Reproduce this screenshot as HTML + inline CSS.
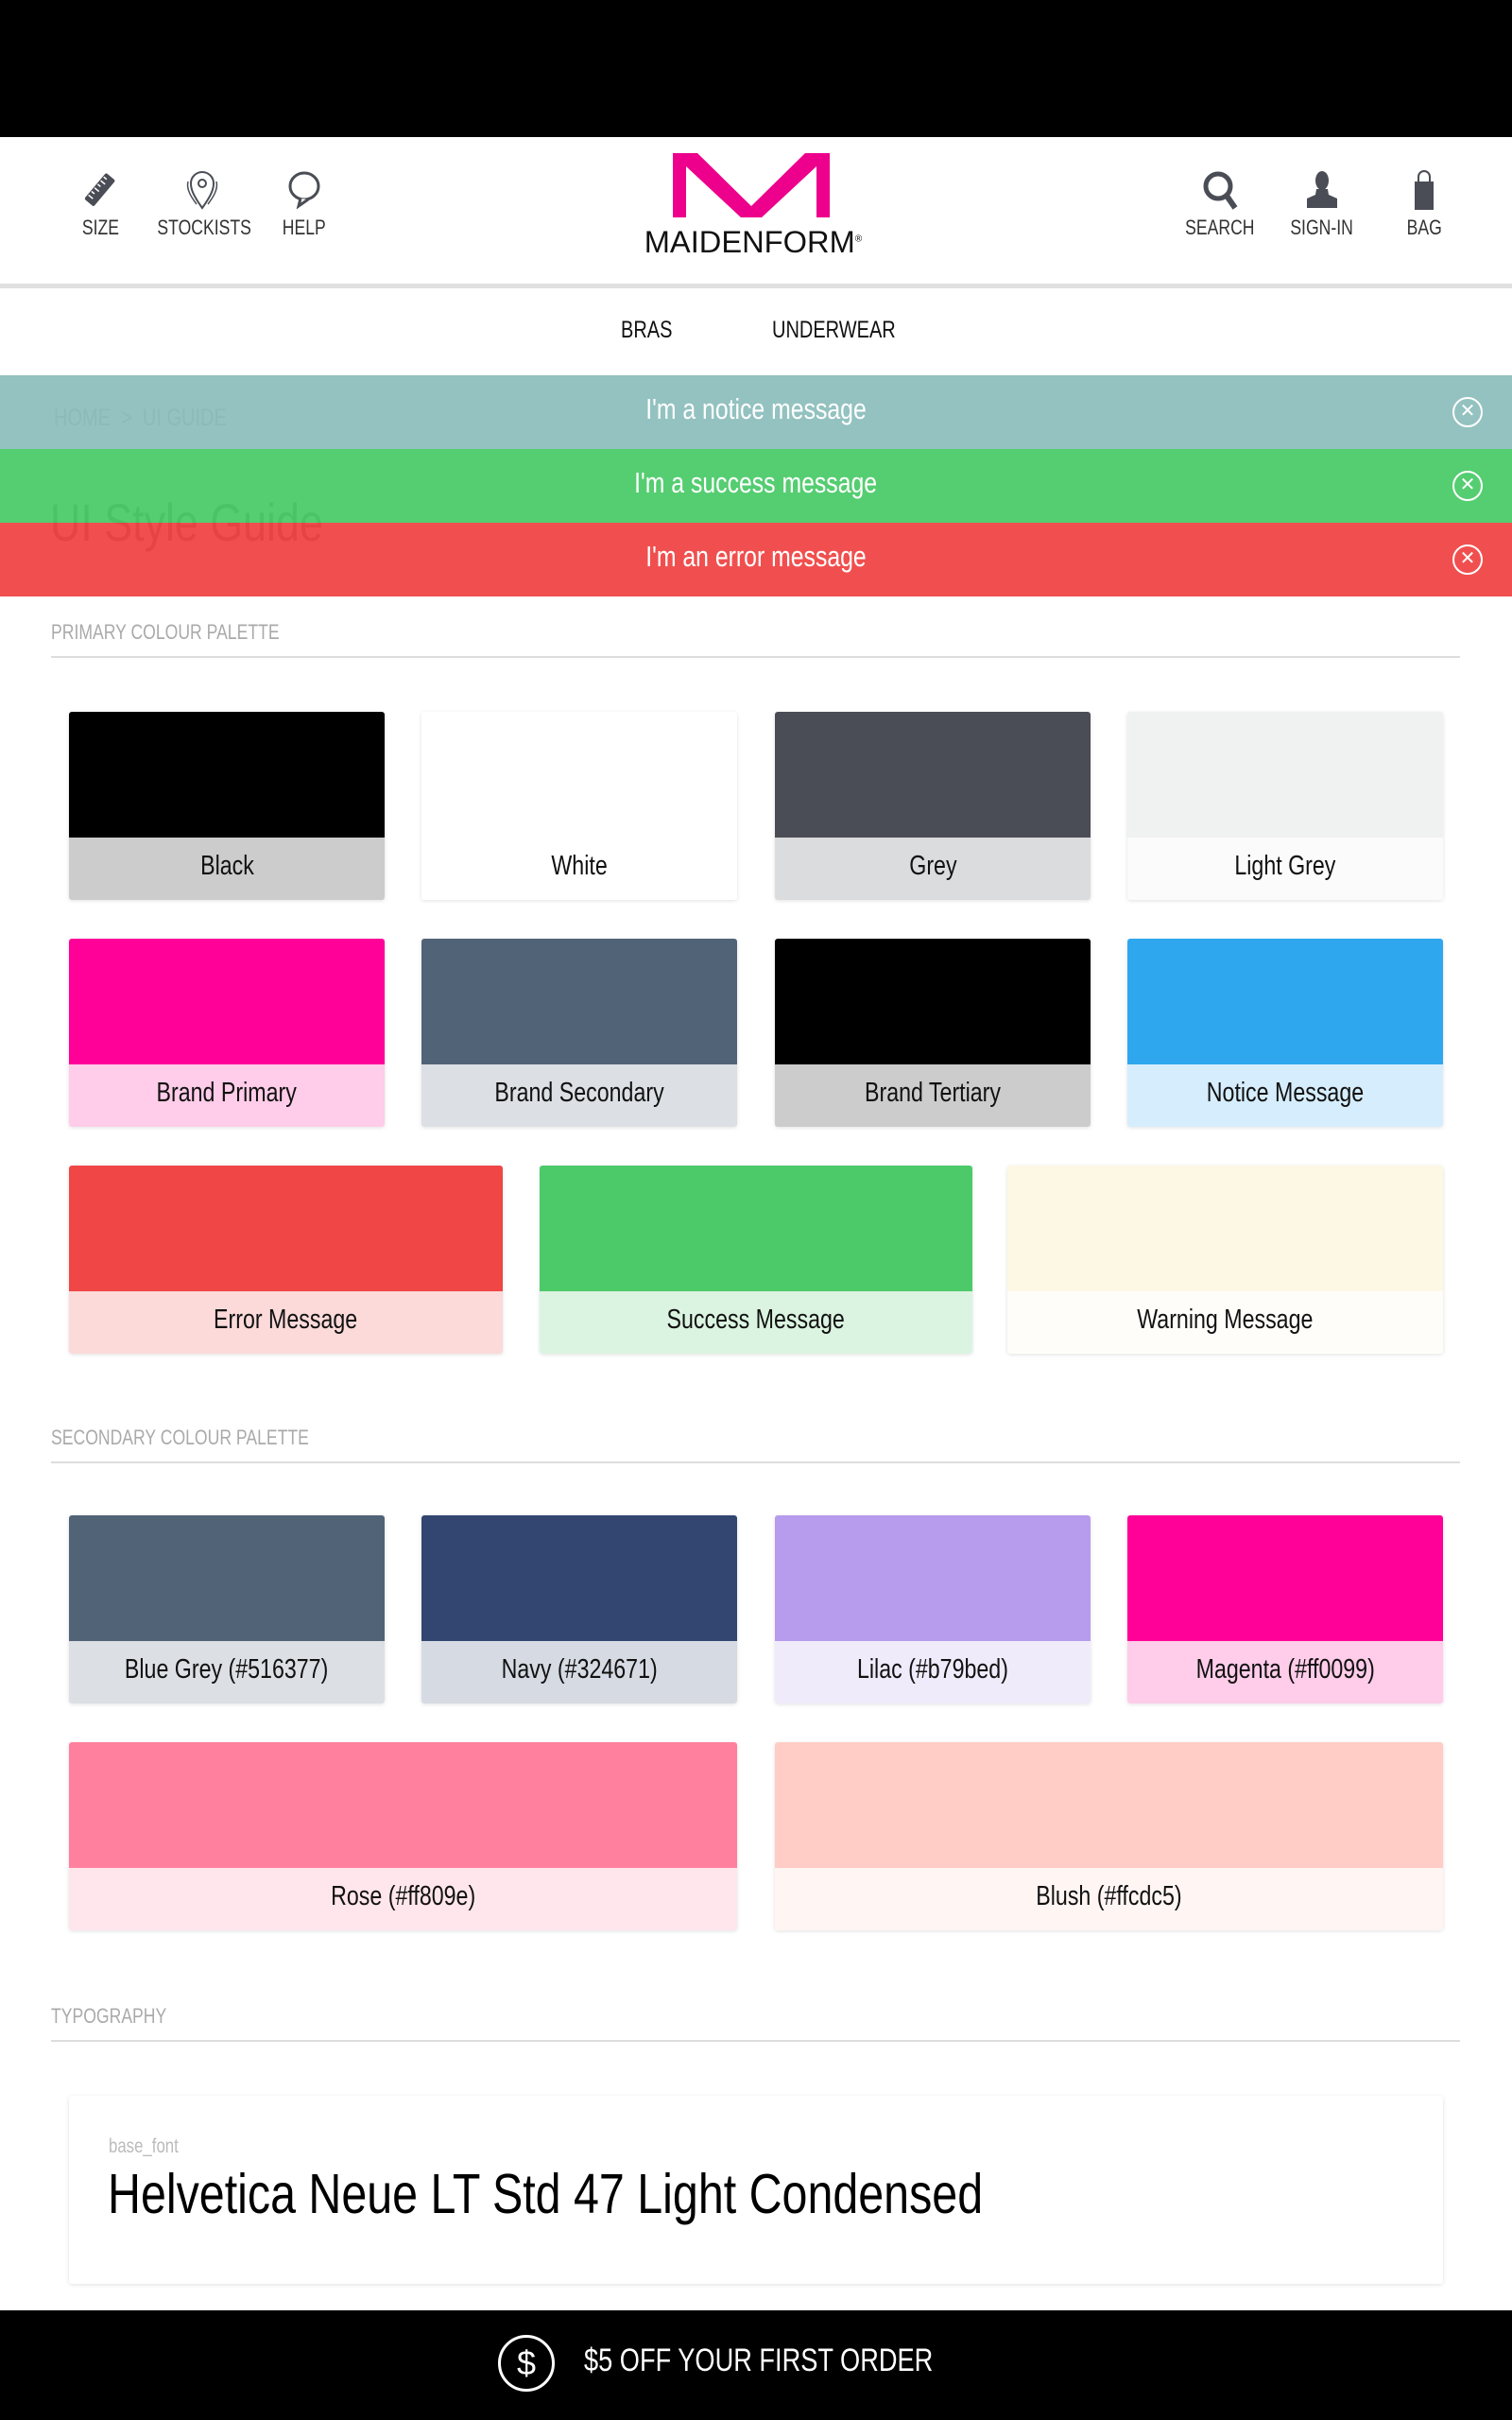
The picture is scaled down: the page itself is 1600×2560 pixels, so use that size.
<!DOCTYPE html>
<html><head><meta charset="utf-8"><style>
*{margin:0;padding:0;box-sizing:border-box}
body{width:1600px;height:2560px;position:relative;background:#fff;font-family:"Liberation Sans",sans-serif;overflow:hidden;color:#000}
.a{position:absolute}
.n{display:inline-block;transform:scaleX(.8);transform-origin:center;white-space:nowrap}
.nl{display:inline-block;transform:scaleX(.8);transform-origin:left;white-space:nowrap}
.top{left:0;top:0;width:1600px;height:145px;background:#000}
.hl{top:300px;left:0;width:1600px;height:5px;background:#e0e0e0}
.ic{text-align:center;font-size:22px;color:#333;width:120px}
.ic svg{display:block;margin:0 auto 6px}
.bar{left:0;width:1600px;height:78px;color:#fff;font-size:31px;text-align:center;line-height:72px}
.bar .x{position:absolute;right:31px;top:23px;width:32px;height:32px;border:2px solid #fff;border-radius:50%;font-size:20px;line-height:27px;text-align:center}
.sec{left:54px;width:1491px;font-size:22px;color:#aaa;border-bottom:2px solid #ddd;padding-bottom:12px}
.sw{box-shadow:0 1px 4px rgba(0,0,0,.12);border-radius:3px;overflow:hidden}
.sw .c{height:133px}
.sw .l{height:66px;font-size:29px;text-align:center;line-height:60px;color:#111}
</style></head><body>
<div class="a top"></div>
<div class="a ic" style="left:46px;top:180px"><svg width="40" height="42" viewBox="0 0 40 42"><g transform="rotate(-50 20 21)"><rect x="2" y="14" width="36" height="13" rx="2" fill="#4a4d55"/><path d="M8 15v6M13 15v4M18 15v6M23 15v4M28 15v6M33 15v4" stroke="#fff" stroke-width="1.5"/></g></svg><span class="n">SIZE</span></div>
<div class="a ic" style="left:154px;top:180px"><svg width="40" height="42" viewBox="0 0 40 42"><path d="M20 40 C10 26 8 20 8 14 A12 12 0 0 1 32 14 C32 20 30 26 20 40Z" fill="none" stroke="#4a4d55" stroke-width="2"/><circle cx="20" cy="14" r="4" fill="none" stroke="#4a4d55" stroke-width="2"/><path d="M5 12 C3 20 8 28 14 36M35 12 C37 20 32 28 26 36" fill="none" stroke="#4a4d55" stroke-width="1.5"/></svg><span class="n">STOCKISTS</span></div>
<div class="a ic" style="left:262px;top:180px"><svg width="40" height="42" viewBox="0 0 40 42"><ellipse cx="20" cy="17" rx="15" ry="14" fill="none" stroke="#4a4d55" stroke-width="3"/><path d="M16 30 L14 38 L24 31" fill="#fff" stroke="#4a4d55" stroke-width="3"/></svg><span class="n">HELP</span></div>
<div class="a ic" style="left:1231px;top:180px"><svg width="40" height="42" viewBox="0 0 40 42"><circle cx="18" cy="17" r="13" fill="none" stroke="#4a4d55" stroke-width="5"/><path d="M27 27 L36 40" stroke="#4a4d55" stroke-width="6"/></svg><span class="n">SEARCH</span></div>
<div class="a ic" style="left:1339px;top:180px"><svg width="40" height="42" viewBox="0 0 40 42"><ellipse cx="20" cy="11" rx="7" ry="10" fill="#4a4d55"/><path d="M14 20 L26 20 L27 26 L36 30 L36 40 L4 40 L4 30 L13 26Z" fill="#4a4d55"/></svg><span class="n">SIGN-IN</span></div>
<div class="a ic" style="left:1447px;top:180px"><svg width="40" height="42" viewBox="0 0 40 42"><path d="M14 12 V7 A6 6 0 0 1 26 7 V12" fill="none" stroke="#4a4d55" stroke-width="2"/><rect x="10" y="12" width="20" height="30" fill="#4a4d55"/></svg><span class="n">BAG</span></div>
<svg class="a" style="left:710px;top:160px" width="170" height="72" viewBox="0 0 170 72"><path d="M2 2 H28 L85 58 L142 2 H168 V70 H154 V16 L96 70 H74 L16 16 V70 H2Z" fill="#ec008c"/></svg>
<div class="a" style="left:640px;top:238px;width:315px;text-align:center;font-size:32px;color:#111"><span style="display:inline-block;transform:scaleX(1.02);white-space:nowrap">MAIDENFORM<sup style="font-size:10px">®</sup></span></div>
<div class="a hl"></div>
<div class="a" style="left:657px;top:335px;font-size:25px;color:#111"><span class="nl">BRAS</span></div>
<div class="a" style="left:817px;top:335px;font-size:25px;color:#111"><span class="nl">UNDERWEAR</span></div>
<div class="a" style="left:57px;top:428px;font-size:25px;color:#666"><span class="nl">HOME &nbsp;&gt;&nbsp; UI GUIDE</span></div>
<div class="a" style="left:53px;top:520px;font-size:56px;color:#333"><span class="nl">UI Style Guide</span></div>
<div class="a bar" style="top:397px;background:rgba(141,191,189,.95)"><span class="n">I'm a notice message</span><div class="x">✕</div></div>
<div class="a bar" style="top:475px;background:rgba(76,202,105,.95)"><span class="n">I'm a success message</span><div class="x">✕</div></div>
<div class="a bar" style="top:553px;background:rgba(240,70,70,.95)"><span class="n">I'm an error message</span><div class="x">✕</div></div>
<div class="a sec" style="top:656px"><span class="nl">PRIMARY COLOUR PALETTE</span></div>
<div class="a sw" style="left:73px;top:753px;width:334px"><div class="c" style="background:#000"></div><div class="l" style="background:#ccc"><span class="n">Black</span></div></div>
<div class="a sw" style="left:446px;top:753px;width:334px"><div class="c" style="background:#fff"></div><div class="l" style="background:#fff"><span class="n">White</span></div></div>
<div class="a sw" style="left:820px;top:753px;width:334px"><div class="c" style="background:#4a4d55"></div><div class="l" style="background:#dbdcde"><span class="n">Grey</span></div></div>
<div class="a sw" style="left:1193px;top:753px;width:334px"><div class="c" style="background:#f0f1f1"></div><div class="l" style="background:#fbfbfb"><span class="n">Light Grey</span></div></div>
<div class="a sw" style="left:73px;top:993px;width:334px"><div class="c" style="background:#ff0099"></div><div class="l" style="background:#ffcce9"><span class="n">Brand Primary</span></div></div>
<div class="a sw" style="left:446px;top:993px;width:334px"><div class="c" style="background:#516377"></div><div class="l" style="background:#dcdfe3"><span class="n">Brand Secondary</span></div></div>
<div class="a sw" style="left:820px;top:993px;width:334px"><div class="c" style="background:#000"></div><div class="l" style="background:#ccc"><span class="n">Brand Tertiary</span></div></div>
<div class="a sw" style="left:1193px;top:993px;width:334px"><div class="c" style="background:#2ea7ef"></div><div class="l" style="background:#d5edfc"><span class="n">Notice Message</span></div></div>
<div class="a sw" style="left:73px;top:1233px;width:459px"><div class="c" style="background:#f04646"></div><div class="l" style="background:#fcdada"><span class="n">Error Message</span></div></div>
<div class="a sw" style="left:571px;top:1233px;width:458px"><div class="c" style="background:#4cca69"></div><div class="l" style="background:#dbf4e1"><span class="n">Success Message</span></div></div>
<div class="a sw" style="left:1066px;top:1233px;width:461px"><div class="c" style="background:#fdf8e4"></div><div class="l" style="background:#fefdf9"><span class="n">Warning Message</span></div></div>
<div class="a sec" style="top:1508px"><span class="nl">SECONDARY COLOUR PALETTE</span></div>
<div class="a sw" style="left:73px;top:1603px;width:334px"><div class="c" style="background:#516377"></div><div class="l" style="background:#dcdfe3"><span class="n">Blue Grey (#516377)</span></div></div>
<div class="a sw" style="left:446px;top:1603px;width:334px"><div class="c" style="background:#324671"></div><div class="l" style="background:#d6dae2"><span class="n">Navy (#324671)</span></div></div>
<div class="a sw" style="left:820px;top:1603px;width:334px"><div class="c" style="background:#b79bed"></div><div class="l" style="background:#f0ebfb"><span class="n">Lilac (#b79bed)</span></div></div>
<div class="a sw" style="left:1193px;top:1603px;width:334px"><div class="c" style="background:#ff0099"></div><div class="l" style="background:#ffcce9"><span class="n">Magenta (#ff0099)</span></div></div>
<div class="a sw" style="left:73px;top:1843px;width:707px"><div class="c" style="background:#ff809e"></div><div class="l" style="background:#ffe6ec"><span class="n">Rose (#ff809e)</span></div></div>
<div class="a sw" style="left:820px;top:1843px;width:707px"><div class="c" style="background:#ffcdc5"></div><div class="l" style="background:#fff5f3"><span class="n">Blush (#ffcdc5)</span></div></div>
<div class="a sec" style="top:2120px"><span class="nl">TYPOGRAPHY</span></div>
<div class="a sw" style="left:73px;top:2217px;width:1454px;height:199px;background:#fff">
<div class="a" style="left:42px;top:42px;font-size:21px;color:#bbb"><span class="nl">base_font</span></div>
<div class="a" style="left:41px;top:70px;font-size:59px;color:#000"><span class="nl" style="transform:scaleX(.82)">Helvetica Neue LT Std 47 Light Condensed</span></div></div>
<div class="a" style="left:0;top:2444px;width:1600px;height:116px;background:#000"></div>
<div class="a" style="left:527px;top:2470px;width:60px;height:60px;border:3px solid #fff;border-radius:50%;color:#fff;font-size:36px;text-align:center;line-height:54px">$</div>
<div class="a" style="left:618px;top:2478px;font-size:34px;color:#fff"><span class="nl">$5 OFF YOUR FIRST ORDER</span></div>
</body></html>
